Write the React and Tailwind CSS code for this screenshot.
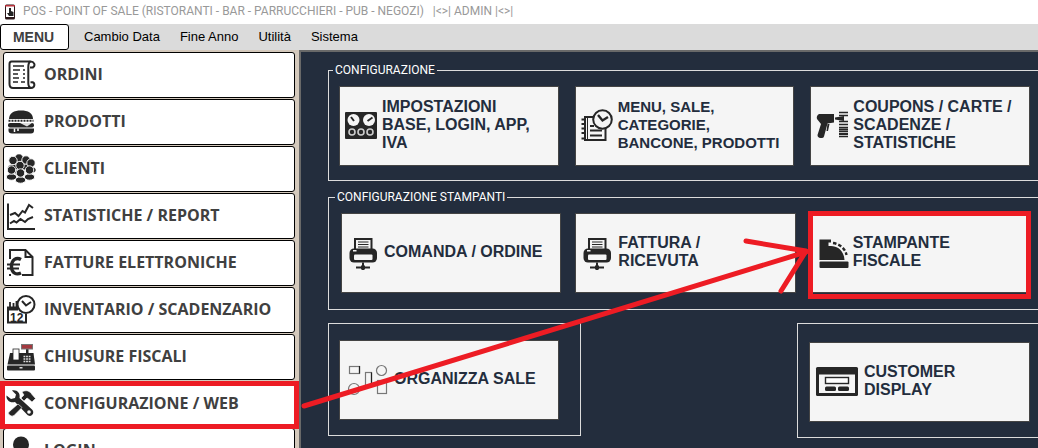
import React from "react";
import clsx from "clsx";

const INK = "#262626";

/* ---------- sidebar icons (30x30) ---------- */

function OrdersIcon() {
  return (
    <g fill="none" stroke={INK} strokeWidth="2">
      <path d="M27 7.5C30 5 28 1.5 24.5 1.5H5.5C4 1.5 3.5 2.5 3.5 4V24C3.5 27 5 28 7 28H25C29 28 29.5 23 26 22" />
      <path d="M24.5 1.5C22 2.5 22.3 5 22.3 8V23C22.3 26 23 27.5 25 28" />
      <path d="M27.5 7.5H24M26 22.3H24.5" />
      <path d="M7 6H18M7 10H14M17 10H19M7 14H12M17 14H19M7 18H13M17 18H19M7 22H12M15 22H19" strokeWidth="1.6" />
    </g>
  );
}

function BurgerIcon() {
  return (
    <g fill={INK}>
      <path d="M3 12C3 6 8 3.5 15 3.5S27 6 27 12Z" />
      <path d="M2.500 13.800H27.500" stroke={INK} strokeWidth="2" strokeDasharray="2 1" />
      <rect x="2" y="16" width="26" height="4.500" rx="2" />
      <path d="M14 16H26L21 19.500Z" fill="#ddd" />
      <path d="M2.500 21.500H28V23.500Q28 26.500 25 26.500H6Q2.500 26.500 2.500 23.500Z" />
      <path d="M8.500 21.500V25M12 21.500V24" stroke="#fff" strokeWidth="1.500" />
    </g>
  );
}

// back row first, so that the front row covers it
const PEOPLE = [
  [13, 4], [7, 6.5], [20, 6], [25, 9], [14, 11.5], [5.5, 16], [23.5, 16], [14.5, 19],
];

function CrowdIcon() {
  return (
    <g fill={INK} stroke="#fff" strokeWidth="0.9">
      {PEOPLE.map(([x, y]) => (
        <g key={`${x}-${y}`}>
          <ellipse cx={x} cy={y + 7} rx="5.200" ry="3.200" />
          <circle cx={x} cy={y} r="4.200" />
        </g>
      ))}
    </g>
  );
}

function ChartIcon() {
  return (
    <g fill="none" stroke={INK} strokeWidth="2">
      <path d="M2 2.500V28H29" />
      <path d="M4 14L9 12L12.500 15L16.500 10L19 11.500L23 4L27 7" />
      <path d="M4 22.500L8 20L10.500 21.500L14.500 18L19 21L22 18L27 16" />
    </g>
  );
}

function EuroIcon() {
  return (
    <g fill="none" stroke={INK} strokeWidth="2">
      <path d="M4 11V2H19.500L26.500 9V27H16M5 27H3" />
      <path d="M19.500 2V9H26.500" />
      <path d="M15 11.500C10.500 9 5.500 11.500 5.500 18.500S10.500 27 15 25" strokeWidth="3.400" />
      <path d="M1 16.500H14M1 20.500H13" strokeWidth="2.200" />
    </g>
  );
}

function InventoryIcon() {
  return (
    <g fill="none" stroke={INK} strokeWidth="2">
      <path d="M2 14V27.500H20V19" />
      <path d="M1 13.500H12" strokeWidth="4" />
      <path d="M4 13V7M7.500 13V8M10.500 12V6" strokeWidth="1.800" />
      <text x="4" y="26.500" fontSize="12" fontWeight="700" fontFamily="Liberation Sans, sans-serif" fill={INK} stroke="none">
        12
      </text>
      <circle cx="20" cy="9.500" r="8.500" fill="#fff" />
      <path d="M16 6L20 10.500L25 7" />
    </g>
  );
}

function RegisterIcon() {
  return (
    <g fill={INK}>
      <rect x="1" y="23.500" width="28" height="5" rx="1" />
      <path d="M4 11H27.500L29 22.500H1.500Z" />
      <rect x="7" y="7" width="6" height="11" fill="#fff" stroke={INK} strokeWidth="0.800" />
      <rect x="20" y="7" width="2.500" height="5" />
      <rect x="15.500" y="2.500" width="11" height="4.500" fill="#a33a40" stroke="#777" strokeWidth="1" />
      <path d="M17.500 14.500H24.500M17.500 17H24.500M17.500 19.500H24.500" stroke="#ddd" strokeWidth="1.500" strokeDasharray="1.800 0.800" />
      <rect x="13.500" y="25" width="3" height="1.500" fill="#ddd" />
    </g>
  );
}

function ToolsIcon() {
  return (
    <g fill={INK}>
      <path d="M6 1.500L10 5.500L9 9L5 10L0.500 6.500C0 11 4 14.500 9 13L21 25.500C25 29.500 29.500 24 26 20.500L13.500 9C14.500 4 11 0.500 6 1.500Z" />
      <circle cx="23" cy="23" r="1.800" fill="#fff" />
      <path d="M16 3C20 0.500 24 2 26 5.500L29.500 9.500L26 13L22.500 10L21 9L18 12L15 9L18 6Z" stroke="#fff" strokeWidth="0.600" />
      <path d="M12 15L16 18.500L8 26.500Q6 28 3.500 26T4 22Z" stroke="#fff" strokeWidth="0.600" />
    </g>
  );
}

function UserIcon() {
  return (
    <g fill={INK}>
      <circle cx="15" cy="8.500" r="8" />
      <path d="M2 30C2 21 8 18 15 18S28 21 28 30Z" />
    </g>
  );
}

/* ---------- card icons (32x32, wide ones 43x32) ---------- */

function GaugesIcon() {
  return (
    <g>
      <rect x="0" y="2" width="32" height="27" rx="1" fill={INK} />
      <circle cx="8.500" cy="10" r="6" fill="#f5f5f5" />
      <circle cx="24" cy="10" r="6" fill="#f5f5f5" />
      <path d="M6 7L9 11M27.500 7.500L22.500 11" stroke={INK} strokeWidth="2" />
      <g fill="none" stroke="#ccc" strokeWidth="1.600">
        <circle cx="7" cy="22" r="3" />
        <circle cx="16" cy="22" r="3" />
        <circle cx="25" cy="22" r="3" />
      </g>
    </g>
  );
}

function NotebookIcon() {
  return (
    <g fill="none" stroke={INK} strokeWidth="2">
      <path d="M14 7H4V30H24.500V19" />
      <path d="M6.500 8V29" strokeWidth="1" />
      <path d="M0.500 9.500H5M0.500 14H5M0.500 18.500H5M0.500 23H5M0.500 28.500H5" />
      <path d="M9 16H13M9 20.500H21M9 25.500H21" />
      <circle cx="21.500" cy="9.500" r="9.300" fill="#f5f5f5" />
      <path d="M17 5L21.500 10.500L27 7" strokeWidth="2.400" />
    </g>
  );
}

function ScannerIcon() {
  return (
    <g fill={INK}>
      <path d="M3 4H18V12.500L11.500 13.500L8 26.500Q7.500 28.500 4.500 28T1.500 25L5 14L1 9Q0 6 3 4Z" />
      <path d="M13.500 14L12 21H10.500L11.500 14Z" />
      <path d="M19 7.500L28 6V11L19 9.500Z" />
      <path d="M23 2.500H32M23 5.500H32M23 11.500H32M23 14.500H32M23 17.500H32M23 21.500H32M23 26.500H32" stroke={INK} strokeWidth="1.400" />
      <path d="M23 19.500H32M23 24H32" stroke={INK} strokeWidth="2.200" />
    </g>
  );
}

function PrinterIcon() {
  return (
    <g fill={INK}>
      <path d="M8 12V2H24.500V12" fill="#f5f5f5" stroke={INK} strokeWidth="2" />
      <path d="M11 5H21.500M11 7.500H21.500M11 10H21.500" stroke={INK} strokeWidth="1" />
      <rect x="2.500" y="11.500" width="27.500" height="14" rx="4.500" />
      <rect x="7" y="17.500" width="18.500" height="5.500" rx="1" fill="#f5f5f5" />
      <rect x="6" y="13" width="3.500" height="1.500" fill="#f5f5f5" />
      <path d="M16 25.500V33M9 30.500H23" stroke={INK} strokeWidth="2" />
      <rect x="14" y="28.500" width="4" height="4" />
    </g>
  );
}

function TillIcon() {
  return (
    <g fill={INK}>
      <path d="M3.500 2.500H15V5.500H12.500V9H15C22 9 28 14 28.500 23H3.500Z" />
      <rect x="3.500" y="24.500" width="29" height="6.500" rx="1" />
      <path d="M17 6C24 7 29.500 12 30.500 18" fill="none" stroke={INK} strokeWidth="2.400" strokeDasharray="3.500 2" />
    </g>
  );
}

function TablesIcon() {
  return (
    <g fill="none" stroke="#777" strokeWidth="1.200">
      <rect x="4.500" y="2.500" width="10" height="7" />
      <path d="M14.500 2V9.500" stroke="#222" />
      <circle cx="36.500" cy="6.500" r="5" />
      <rect x="20.500" y="8.500" width="6" height="14" />
      <path d="M26.500 8.500V21" stroke="#222" />
      <circle cx="9" cy="25" r="5.500" />
      <rect x="32.500" y="16.500" width="9" height="13" />
    </g>
  );
}

function DisplayIcon() {
  return (
    <g fill={INK}>
      <rect x="1" y="1" width="42" height="29" rx="1.500" />
      <rect x="4" y="8.500" width="36" height="18.500" fill="#f5f5f5" />
      <rect x="10.500" y="11.500" width="23" height="6" fill="#fff" stroke={INK} strokeWidth="1.400" />
      <rect x="10" y="20.500" width="11" height="4.500" rx="1.500" />
      <rect x="23" y="20.500" width="11" height="4.500" rx="1.500" />
    </g>
  );
}

const menuItems = ["Cambio Data", "Fine Anno", "Utilità", "Sistema"];

const sideItems = [
  { label: "ORDINI", Icon: OrdersIcon },
  { label: "PRODOTTI", Icon: BurgerIcon },
  { label: "CLIENTI", Icon: CrowdIcon },
  { label: "STATISTICHE / REPORT", Icon: ChartIcon },
  { label: "FATTURE ELETTRONICHE", Icon: EuroIcon },
  { label: "INVENTARIO / SCADENZARIO", Icon: InventoryIcon },
  { label: "CHIUSURE FISCALI", Icon: RegisterIcon },
  { label: "CONFIGURAZIONE / WEB", Icon: ToolsIcon, marked: true },
  { label: "LOGIN", Icon: UserIcon },
];

function SideItem({ label, Icon, marked }) {
  return (
    <button
      type="button"
      className={clsx(
        "relative flex h-[46px] shrink-0 items-center gap-2 rounded-[3px] border border-black bg-white pl-0.5 text-left",
        marked && "z-10"
      )}
    >
      <svg viewBox="0 0 30 30" className="size-[30px] shrink-0" aria-hidden="true">
        <Icon />
      </svg>
      <span className="pb-0.5 font-['Open_Sans',sans-serif] text-base leading-5 font-bold whitespace-nowrap text-[#404040]">
        {label}
      </span>
      {marked && <span className="absolute -top-px -right-[5px] -bottom-[3px] -left-1 border-5 border-[#ed1c24]" />}
    </button>
  );
}

function Card({ lines, Icon, wide, small, marked }) {
  return (
    <button
      type="button"
      className={clsx(
        "relative flex h-20 w-full items-center border border-[#444] bg-[#f5f5f5] pl-[5px] text-left",
        wide ? "gap-1.5" : "gap-[5px]"
      )}
    >
      <svg
        viewBox={wide ? "0 0 43 32" : "0 0 32 32"}
        className={clsx("h-8 shrink-0 overflow-visible", wide ? "w-[43px]" : "w-8")}
        aria-hidden="true"
      >
        <Icon />
      </svg>
      <span
        className={clsx(
          "pb-0.5 leading-[18px] font-bold whitespace-nowrap text-[#232d3d]",
          small ? "text-[15px]" : "text-base"
        )}
      >
        {lines.map((line) => (
          <span key={line} className="block">
            {line}
          </span>
        ))}
      </span>
      {marked && <span className="absolute -top-[3px] -right-0.5 -bottom-[7px] -left-[3px] border-5 border-[#ed1c24]" />}
    </button>
  );
}

function Legend({ children }) {
  return (
    <legend className="-ml-1.5 px-0.5 font-[Roboto,sans-serif] text-xs leading-[15px] text-white">{children}</legend>
  );
}

function App() {
  return (
    <div className="relative flex h-screen flex-col overflow-hidden bg-white font-['Liberation_Sans',Arial,sans-serif]">
      <header className="flex h-6 shrink-0 items-center gap-[7px] pl-1">
        <svg viewBox="0 0 12 16" className="h-4 w-3" aria-hidden="true">
          <rect x="1" y="0.500" width="10" height="15" rx="1.500" fill="#2b1719" />
          <rect x="2" y="2" width="8" height="11" fill="#fff" />
          <path d="M1 1H11V2.500H1Z" fill="#b8323c" />
          <path d="M5 4H7V7L9.500 8V12H5L3 9H5Z" fill="#222" />
        </svg>
        <h1 className="pb-0.5 font-[Roboto,sans-serif] text-xs whitespace-pre text-[#999]">
          {"POS - POINT OF SALE (RISTORANTI - BAR - PARRUCCHIERI - PUB - NEGOZI)   |<>| ADMIN |<>|"}
        </h1>
      </header>

      <nav className="flex h-[26px] shrink-0 items-center gap-5 bg-[#dbdbdb] text-[13px] text-black">
        <button
          type="button"
          className="-mr-[5px] h-[26px] w-[69px] rounded-[3px] border border-black bg-white pr-0.5 text-sm font-bold text-[#404040]"
        >
          MENU
        </button>
        {menuItems.map((item) => (
          <button key={item} type="button">
            {item}
          </button>
        ))}
      </nav>

      <div className="flex min-h-0 flex-1">
        <aside className="flex w-[299px] shrink-0 flex-col gap-px overflow-hidden bg-[#d4c9bc] pt-0.5 pr-1 pl-[3px]">
          {sideItems.map((item) => (
            <SideItem key={item.label} {...item} />
          ))}
        </aside>

        <main className="min-w-0 flex-1 border-t-2 border-l-2 border-[#696969] bg-[#232d3d] pt-[11px] pl-[27px]">
          <fieldset className="border border-r-0 border-[#dcdcdc] pt-2 pr-2 pb-3.5 pl-2.5">
            <Legend>CONFIGURAZIONE</Legend>
            <div className="grid grid-cols-3 gap-4">
              <Card lines={["IMPOSTAZIONI", "BASE, LOGIN, APP,", "IVA"]} Icon={GaugesIcon} />
              <Card lines={["MENU, SALE,", "CATEGORIE,", "BANCONE, PRODOTTI"]} Icon={NotebookIcon} small />
              <Card lines={["COUPONS / CARTE /", "SCADENZE /", "STATISTICHE"]} Icon={ScannerIcon} />
            </div>
          </fieldset>

          <fieldset className="mt-[9px] border border-r-0 border-[#dcdcdc] pt-2 pr-2 pb-4 pl-3">
            <Legend>CONFIGURAZIONE STAMPANTI</Legend>
            <div className="grid grid-cols-3 gap-3.5">
              <Card lines={["COMANDA / ORDINE"]} Icon={PrinterIcon} />
              <Card lines={["FATTURA /", "RICEVUTA"]} Icon={PrinterIcon} />
              <Card lines={["STAMPANTE", "FISCALE"]} Icon={TillIcon} marked />
            </div>
          </fieldset>

          <div className="mt-[13px] flex items-start justify-between">
            <section className="w-[253px] border border-[#dcdcdc] pt-4 pr-[21px] pb-[15px] pl-2.5">
              <Card lines={["ORGANIZZA SALE"]} Icon={TablesIcon} wide />
            </section>
            <section className="w-[241px] border border-r-0 border-[#dcdcdc] pt-[18px] pr-2 pb-[15px] pl-[11px]">
              <Card lines={["CUSTOMER", "DISPLAY"]} Icon={DisplayIcon} wide />
            </section>
          </div>
        </main>
      </div>

      {/* hand-drawn pointer from the sidebar entry to the fiscal printer card */}
      <svg
        viewBox="0 0 1038 448"
        className="pointer-events-none absolute top-0 left-0 h-[448px] w-[1038px]"
        fill="none"
        stroke="#ed1c24"
        strokeWidth="5"
        strokeLinecap="round"
        strokeLinejoin="round"
        aria-hidden="true"
      >
        <path d="M304 406L806 252" />
        <path d="M746 241L806 251L781 291" />
      </svg>
    </div>
  );
}

export default App;
